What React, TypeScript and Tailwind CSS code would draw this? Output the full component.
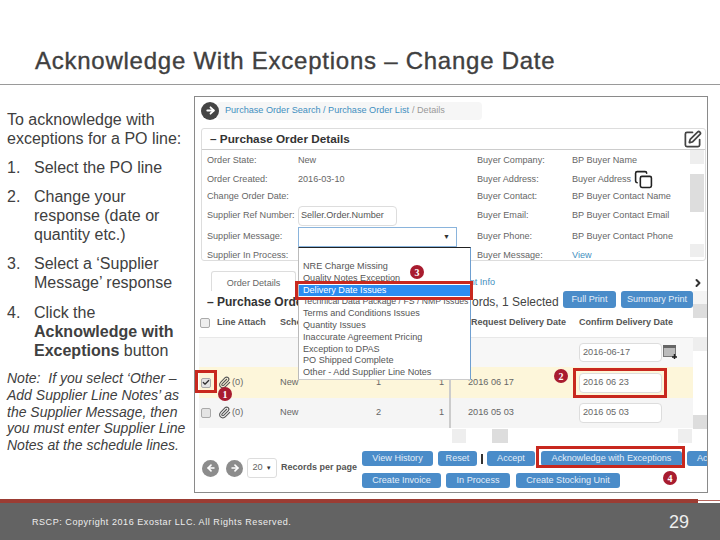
import { ArrowLeft, ArrowRight, Check, ChevronRight, Copy, Paperclip, SquarePen } from "lucide-react";

const sans = "font-['Liberation_Sans',Arial,sans-serif]";

const detailRows = [
  { h: "h-[18px]", a: "Order State:", b: "New", c: "Buyer Company:", d: "BP Buyer Name" },
  { h: "h-[18px]", a: "Order Created:", b: "2016-03-10", c: "Buyer Address:", d: "Buyer Address" },
  { h: "h-[17px]", a: "Change Order Date:", b: "", c: "Buyer Contact:", d: "BP Buyer Contact Name" },
  { h: "h-[22px]", a: "Supplier Ref Number:", b: "input", c: "Buyer Email:", d: "BP Buyer Contact Email" },
  { h: "h-[20px]", a: "Supplier Message:", b: "select", c: "Buyer Phone:", d: "BP Buyer Contact Phone" },
  { h: "h-[17px]", a: "Supplier In Process:", b: "", c: "Buyer Message:", d: "View" },
];

const menuItems = [
  "NRE Charge Missing",
  "Quality Notes Exception",
  "Delivery Date Issues",
  "Technical Data Package / FS / NMP Issues",
  "Terms and Conditions Issues",
  "Quantity Issues",
  "Inaccurate Agreement Pricing",
  "Exception to DPAS",
  "PO Shipped Complete",
  "Other - Add Supplier Line Notes",
];

function Step({ n, children, className = "" }: { n: number; children: React.ReactNode; className?: string }) {
  return (
    <div className={`flex ${className}`}>
      <span className="w-[27px] shrink-0">{n}.</span>
      <div>{children}</div>
    </div>
  );
}

function Btn({ w, h = "h-[15px]", children }: { w: string; h?: string; children: React.ReactNode }) {
  return (
    <div className={`${w} ${h} flex shrink-0 items-center justify-center overflow-hidden rounded-[3px] bg-[#4a8cc9] text-[9.1px] whitespace-nowrap text-[#e4eef8]`}>
      {children}
    </div>
  );
}

function Badge({ n, className }: { n: number; className: string }) {
  return (
    <div className={`absolute flex h-[14px] w-[14px] items-center justify-center rounded-full bg-[#a81c2f] font-['Liberation_Serif',serif] text-[10px] font-bold text-white ${className}`}>
      {n}
    </div>
  );
}

function Box({ className }: { className: string }) {
  return <div className={`absolute border-[3px] border-[#c8281e] ${className}`} />;
}

function LineRow({ h, bg, checked, no, date, value }: { h: string; bg: string; checked: boolean; no: string; date: string; value: string }) {
  return (
    <div className={`flex items-center text-[9.2px] text-[#666] ${h} ${bg}`}>
      <div className="ml-[2px] flex h-[10px] w-[10px] items-center justify-center rounded-[2px] border border-[#aaa] bg-[#e4e4e4]">
        {checked && <Check size={9} strokeWidth={4} className="text-[#333]" />}
      </div>
      <div className="ml-[7px] flex w-[62px] items-center">
        <Paperclip size={13} strokeWidth={2} className="text-[#555]" />
        <span className="ml-[1px]">(0)</span>
      </div>
      <span className="w-[96px]">New</span>
      <span className="w-[63px]">{no}</span>
      <span className="w-[8px]">1</span>
      <div className="mr-[17px] ml-[2px] h-full w-[2px] bg-[#ccc]" />
      <span className="w-[111px]">{date}</span>
      <div className="flex h-[20px] w-[83px] items-center rounded-[4px] border border-[#ddd] bg-white pl-[3px]">{value}</div>
    </div>
  );
}

export default function App() {
  return (
    <div className={`flex h-[540px] w-[720px] flex-col overflow-hidden bg-white ${sans}`}>
      <header className="flex h-[85px] shrink-0 items-end border-b border-[#9a9a9a] pb-[8px] pl-[35px]">
        <h1 className="text-[24px] leading-[30px] tracking-[0.75px] whitespace-nowrap text-[#404040] [-webkit-text-stroke:0.35px_#404040]">
          Acknowledge With Exceptions – Change Date
        </h1>
      </header>

      <main className="flex h-[414px] shrink-0">
        <aside className="flex w-[194px] shrink-0 flex-col pt-[25px] pl-[7px] text-[16px] leading-[19px] text-[#404040]">
          <p>
            To acknowledge with
            <br />
            exceptions for a PO line:
          </p>
          <div className="mt-[10px] flex flex-col gap-[10px]">
            <Step n={1}>Select the PO line</Step>
            <Step n={2}>
              Change your
              <br />
              response (date or
              <br />
              quantity etc.)
            </Step>
            <Step n={3}>
              Select a ‘Supplier
              <br />
              Message’ response
            </Step>
            <Step n={4} className="mt-[1px]">
              Click the
              <br />
              <b>Acknowledge with</b>
              <br />
              <b>Exceptions</b> button
            </Step>
          </div>
          <p className="mt-[10px] text-[14px] leading-[16.8px] italic">
            Note:&nbsp; If you select ‘Other –
            <br />
            Add Supplier Line Notes’ as
            <br />
            the Supplier Message, then
            <br />
            you must enter Supplier Line
            <br />
            Notes at the schedule lines.
          </p>
        </aside>

        <section className="relative mt-[11px] h-[397px] w-[514px] shrink-0 overflow-hidden border border-[#8a8a8a] bg-white">
          <div className="flex h-[27px] items-center pl-[6px]">
            <div className="z-10 flex h-[18px] w-[18px] items-center justify-center rounded-full bg-[#444]">
              <ArrowRight size={11} strokeWidth={4} className="text-white" />
            </div>
            <div className="-ml-[2px] flex h-[18px] w-[265px] items-center rounded-[4px] bg-[#f6f6f6] pl-[8px] text-[9.1px] whitespace-nowrap text-[#3f8fc0]">
              Purchase Order Search / Purchase Order List <span className="ml-[3px] text-[#999]">/ Details</span>
            </div>
          </div>

          <div className="mt-[4px] ml-[6px] h-[133px] w-[505px] overflow-hidden rounded-[3px] border border-[#ddd]">
            <div className="flex h-[21px] items-center justify-between border-b border-[#ccc] pr-[3px] pl-[8px] text-[11.75px] font-bold text-[#333]">
              <span>– Purchase Order Details</span>
              <SquarePen size={19} strokeWidth={2.2} className="text-[#444]" />
            </div>
            <div className="pt-[2px] pl-[5px] text-[9.1px] text-[#666]">
              {detailRows.map((row) => (
                <div key={row.a} className={`grid grid-cols-[91px_179px_95px_1fr] items-center ${row.h}`}>
                  <span className="whitespace-nowrap">{row.a}</span>
                  {row.b === "input" ? (
                    <div className="flex h-[20px] w-[99px] items-center rounded-[4px] border border-[#ddd] pl-[2px] text-[#555]">Seller.Order.Number</div>
                  ) : row.b === "select" ? (
                    <div className="flex h-[20px] w-[159px] items-center justify-end border border-[#8ab4dc] pr-[6px] text-[7px] text-[#333]">▼</div>
                  ) : (
                    <span>{row.b}</span>
                  )}
                  <span>{row.c}</span>
                  <span className={`flex items-center gap-[3px] ${row.d === "View" ? "text-[#3f8fc0]" : ""}`}>
                    {row.d}
                    {row.d === "Buyer Address" && <Copy size={19} strokeWidth={2} className="text-[#222]" />}
                  </span>
                </div>
              ))}
            </div>
          </div>

          <div className="mt-[10px] flex h-[20px] items-center pr-[3px] pl-[16px] text-[9.1px]">
            <div className="flex h-full w-[85px] items-center justify-center rounded-t-[3px] border border-b-0 border-[#ddd] pt-[4px] text-[#666]">Order Details</div>
            <span className="mr-[197px] ml-auto pt-[4px] text-[#3f8fc0]">nt Info</span>
            <ChevronRight size={12} strokeWidth={4} className="mt-[3px] text-[#333]" />
          </div>

          <div className="flex h-[21px] items-start pl-[12px]">
            <span className="mt-[2px] w-[265px] text-[12px] font-bold text-[#333]">– Purchase Orde</span>
            <span className="mt-[2px] w-[91px] text-[12px] whitespace-nowrap text-[#444]">ords, 1 Selected</span>
            <div className="flex gap-[5px]">
              <Btn w="w-[53px]" h="h-[17px]">Full Print</Btn>
              <Btn w="w-[72px]" h="h-[17px]">Summary Print</Btn>
            </div>
          </div>

          <div className="flex h-[25px] items-center pb-[3px] pl-[5px] text-[9px] font-bold text-[#555]">
            <div className="h-[10px] w-[10px] rounded-[2px] border border-[#aaa] bg-[#eee]" />
            <span className="ml-[7px] w-[63px]">Line Attach</span>
            <span className="w-[191px]">Sche</span>
            <span className="w-[108px]">Request Delivery Date</span>
            <span>Confirm Delivery Date</span>
          </div>

          <div className="ml-[4px] w-[494px]">
            <div className="flex h-[30px] items-center border-t border-[#e8e8e8] bg-[#f7f7f7] pl-[380px] text-[9.2px] text-[#666]">
              <div className="flex h-[19px] w-[83px] items-center rounded-[4px] border border-[#ddd] bg-white pl-[3px]">2016-06-17</div>
              <svg width="14" height="15" viewBox="0 0 14 15" className="ml-[1px]">
                <rect x="0.5" y="0.5" width="12" height="11" fill="#bbb" stroke="#777" />
                <rect x="0" y="0" width="13" height="3" fill="#666" />
                <path d="M9 12h5M11.5 9v5" stroke="#222" strokeWidth="1.5" />
              </svg>
            </div>
            <LineRow h="h-[31px]" bg="bg-[#fdf6da]" checked no="1" date="2016 06 17" value="2016 06 23" />
            <LineRow h="h-[30px]" bg="bg-[#f5f5f5]" checked={false} no="2" date="2016 05 03" value="2016 05 03" />
          </div>

          <div className="mt-[23px] flex pl-[7px]">
            <div className="flex h-[37px] w-[160px] shrink-0 items-center pb-[3px]">
              <div className="flex h-[17px] w-[17px] items-center justify-center rounded-full bg-[#8c8c8c]">
                <ArrowLeft size={10} strokeWidth={4} className="text-white" />
              </div>
              <div className="ml-[7px] flex h-[17px] w-[17px] items-center justify-center rounded-full bg-[#8c8c8c]">
                <ArrowRight size={10} strokeWidth={4} className="text-white" />
              </div>
              <div className="ml-[4px] flex h-[20px] w-[30px] items-center justify-center gap-[3px] rounded-[3px] border border-[#ddd] text-[9.2px] text-[#666]">
                20 <span className="text-[6px] text-[#333]">▼</span>
              </div>
              <span className="ml-[4px] text-[9px] font-bold whitespace-nowrap text-[#555]">Records per page</span>
            </div>
            <div className="flex flex-col gap-[7px]">
              <div className="flex items-center">
                <Btn w="w-[71px]">View History</Btn>
                <Btn w="ml-[5px] w-[39px]">Reset</Btn>
                <div className="mr-[4px] ml-[4px] h-[10px] w-[2px] bg-[#333]" />
                <Btn w="w-[48px]">Accept</Btn>
                <Btn w="ml-[6px] w-[141px]">Acknowledge with Exceptions</Btn>
                <Btn w="ml-[5px] w-[40px] justify-start! pl-[10px]">Ac</Btn>
              </div>
              <div className="flex">
                <Btn w="w-[79px]">Create Invoice</Btn>
                <Btn w="ml-[5px] w-[64px]">In Process</Btn>
                <Btn w="ml-[6px] w-[104px]">Create Stocking Unit</Btn>
              </div>
            </div>
          </div>

          {/* scrollbar remnants from the screenshot */}
          <div className="absolute top-[53px] left-[495px] h-[14px] w-[14px] bg-[#eee]" />
          <div className="absolute top-[77px] left-[495px] h-[38px] w-[14px] bg-[#ddd]" />
          <div className="absolute top-[147px] left-[495px] h-[13px] w-[14px] bg-[#eee]" />
          <div className="absolute top-[194px] left-[498px] h-[13px] w-[14px] bg-[#f4f4f4]" />
          <div className="absolute top-[207px] left-[498px] h-[14px] w-[14px] bg-[#ddd]" />
          <div className="absolute top-[240px] left-[498px] h-[14px] w-[14px] bg-[#eee]" />
          <div className="absolute top-[318px] left-[498px] h-[14px] w-[14px] bg-[#ddd]" />
          <div className="absolute top-[332px] left-[257px] h-[14px] w-[14px] bg-[#eee]" />
          <div className="absolute top-[332px] left-[297px] h-[14px] w-[16px] bg-[#ddd]" />
          <div className="absolute top-[332px] left-[483px] h-[14px] w-[14px] bg-[#eee]" />

          {/* open supplier message dropdown */}
          <div className="absolute top-[150px] left-[103px] h-[133px] w-[173px] border border-t-[#222] border-r-[#6f9fd0] border-b-[#ccc] border-l-[#bbb] bg-white pt-[13px] text-[9.1px] leading-[11.8px] text-[#555]">
            {menuItems.map((item) => (
              <div
                key={item}
                className={`pl-[4px] whitespace-nowrap ${item === "Delivery Date Issues" ? "bg-[#2a8cf0] text-white" : ""} ${item.startsWith("Technical") ? "text-[8.7px]" : ""}`}
              >
                {item}
              </div>
            ))}
          </div>

          <Box className="top-[184px] left-[100px] h-[19px] w-[178px]" />
          <Box className="top-[273px] left-[0px] h-[23px] w-[22px]" />
          <Box className="top-[271px] left-[378px] h-[30px] w-[94px]" />
          <Box className="top-[349px] left-[341px] h-[22px] w-[149px]" />

          <Badge n={3} className="top-[168px] left-[215px]" />
          <Badge n={1} className="top-[290px] left-[23px]" />
          <Badge n={2} className="top-[272px] left-[359px]" />
          <Badge n={4} className="top-[374px] left-[468px]" />
        </section>
      </main>

      <div className="flex h-[4px] shrink-0">
        <div className="h-full w-[698px] bg-[#9b3c33]" />
        <div className="mt-[1px] h-[1px] flex-1 bg-[#b5655d]" />
      </div>
      <footer className="flex flex-1 items-center justify-between bg-[#636363] pt-[2px] pr-[31px] pl-[32px] text-[#eee]">
        <span className="text-[9px] tracking-[0.56px]">RSCP: Copyright 2016 Exostar LLC. All Rights Reserved.</span>
        <span className="text-[18px] font-light">29</span>
      </footer>
    </div>
  );
}
